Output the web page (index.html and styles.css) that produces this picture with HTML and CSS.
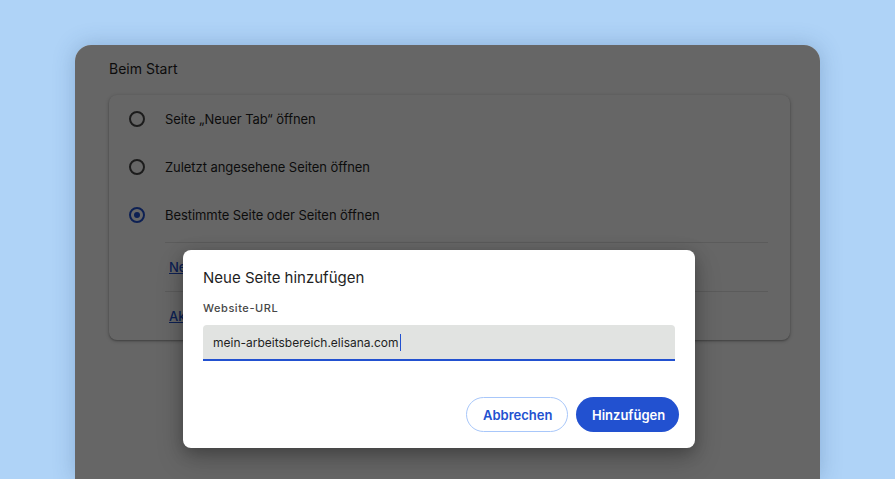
FILE: index.html
```html
<!DOCTYPE html>
<html lang="de">
<head>
<meta charset="utf-8">
<title>Einstellungen – Beim Start</title>
<link rel="stylesheet" href="styles.css">
</head>
<body>
  <div class="window">
    <section class="settings">
      <h2 class="section-title">Beim Start</h2>
      <div class="card">
        <label class="option">
          <span class="radio"></span>
          <span class="option-text">Seite „Neuer Tab“ öffnen</span>
        </label>
        <label class="option">
          <span class="radio"></span>
          <span class="option-text">Zuletzt angesehene Seiten öffnen</span>
        </label>
        <label class="option">
          <span class="radio radio-checked"></span>
          <span class="option-text">Bestimmte Seite oder Seiten öffnen</span>
        </label>
        <div class="sublist">
          <div class="subrow"><a class="link" href="#">Neue Seite hinzufügen</a></div>
          <div class="subrow"><a class="link" href="#">Aktuelle Seiten verwenden</a></div>
        </div>
      </div>
    </section>

    <div class="scrim"></div>

    <div class="dialog" role="dialog" aria-labelledby="dlg-title">
      <h3 class="dialog-title" id="dlg-title">Neue Seite hinzufügen</h3>
      <div class="field-label">Website-URL</div>
      <div class="field">
        <span class="field-value">mein-arbeitsbereich.elisana.com</span><span class="caret"></span>
      </div>
      <div class="actions">
        <button class="btn btn-outline">Abbrechen</button>
        <button class="btn btn-filled">Hinzufügen</button>
      </div>
    </div>
  </div>
</body>
</html>
```

FILE: styles.css
```css
* {
  box-sizing: border-box;
}

html, body {
  margin: 0;
  height: 100%;
  overflow: hidden;
}

body {
  background: #afd3f7;
  font-family: "Inter", "Roboto", "Liberation Sans", sans-serif;
  color: #1f1f1f;
  padding: 45px 0 0 75px;
}

/* Browser window */
.window {
  position: relative;
  width: 745px;
  height: 434px;
  background: #ffffff;
  border-radius: 16px 16px 0 0;
  overflow: hidden;
  box-shadow: 0 0 22px rgba(40, 80, 130, 0.28);
}

.settings {
  padding: 0 30px 0 34px;
}

.section-title {
  margin: 0;
  height: 50px;
  padding-top: 15px;
  font-size: 14px;
  font-weight: 400;
  line-height: 18px;
  color: #1f1f1f;
}

.card {
  border-radius: 8px;
  background: #ffffff;
  box-shadow: 0 1px 2px rgba(0, 0, 0, 0.3), 0 1px 4px 1px rgba(0, 0, 0, 0.12);
  padding: 0 22px 0 18px;
}

.option {
  display: flex;
  align-items: center;
  height: 48px;
  gap: 18px;
}

.option:nth-child(3) {
  height: 47px;
  padding-top: 1px;
}

.radio {
  width: 20px;
  height: 20px;
  flex: none;
  position: relative;
}

.radio::before {
  content: "";
  position: absolute;
  inset: 2px;
  border: 2px solid #474747;
  border-radius: 50%;
}

.radio-checked::before {
  border-color: #2251d0;
}

.radio-checked::after {
  content: "";
  position: absolute;
  inset: 7px;
  border-radius: 50%;
  background: #2251d0;
}

.option-text {
  font-size: 13px;
  line-height: 18px;
  letter-spacing: -0.005em;
}

.sublist {
  margin-left: 38px;
  padding-top: 4px;
}

.subrow {
  height: 49px;
  border-top: 1px solid #e3e3e3;
  display: flex;
  align-items: center;
  padding-left: 4px;
}

.link {
  color: #2251d0;
  font-size: 13px;
  font-weight: 500;
}

/* Modal backdrop over the window */
.scrim {
  position: absolute;
  inset: 0;
  background: rgba(0, 0, 0, 0.6);
}

.dialog {
  position: absolute;
  left: 108px;
  top: 205px;
  width: 512px;
  background: #ffffff;
  border-radius: 8px;
  padding: 18px 16px 16px 20px;
  box-shadow: 0 4px 16px rgba(0, 0, 0, 0.25), 0 12px 28px rgba(0, 0, 0, 0.18);
}

.dialog-title {
  margin: 0;
  font-size: 15px;
  font-weight: 400;
  line-height: 20px;
  color: #1f1f1f;
}

.field-label {
  margin-top: 13px;
  font-size: 11px;
  font-weight: 500;
  letter-spacing: 0.05em;
  line-height: 14px;
  color: #474747;
}

.field {
  margin-top: 10px;
  margin-right: 4px;
  height: 36px;
  background: #e1e3e1;
  border-radius: 4px 4px 0 0;
  border-bottom: 2px solid #2251d0;
  display: flex;
  align-items: center;
  padding: 1px 10px 0;
  font-size: 12px;
  color: #1f1f1f;
}

.caret {
  display: inline-block;
  width: 1px;
  height: 17px;
  background: #2251d0;
  margin-left: 1px;
}

.actions {
  margin-top: 36px;
  display: flex;
  justify-content: flex-end;
  gap: 8px;
}

.btn {
  height: 35px;
  border-radius: 18px;
  font-family: inherit;
  font-size: 13px;
  font-weight: 600;
  padding: 0 16px;
  cursor: pointer;
}

.btn-outline {
  width: 102px;
  background: #ffffff;
  color: #2251d0;
  border: 1px solid #a8c7fa;
}

.btn-filled {
  width: 103px;
  background: #2251d0;
  color: #ffffff;
  border: none;
}
```
